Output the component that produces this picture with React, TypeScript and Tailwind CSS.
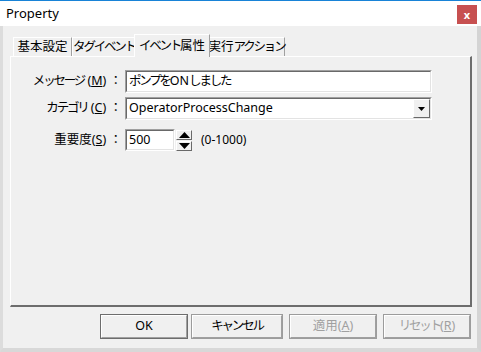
import React from 'react';

const font = { fontFamily: '"Noto Sans", "Noto Sans CJK JP", sans-serif' };

// narrow kana, like Meiryo UI
function K({ children }: { children: React.ReactNode }) {
  return <span className="tracking-[-2.2px]">{children}</span>;
}

function Tab({ label, active, width }: { label: React.ReactNode; active?: boolean; width: string }) {
  if (active) {
    return (
      <div className={'relative z-10 -mx-[2px] -mb-[1px] flex h-[23px] items-start justify-center whitespace-nowrap border-l border-t border-white border-r border-r-[#a0a0a0] bg-[#f0f0f0] pt-[2px] ' + width}>
        {label}
      </div>
    );
  }
  return (
    <div className={'mt-[3px] flex h-[19px] items-center justify-center whitespace-nowrap border-l border-t border-white border-r border-r-[#a0a0a0] ' + width}>
      {label}
    </div>
  );
}

function Button({ label, disabled, main, width }: { label: React.ReactNode; disabled?: boolean; main?: boolean; width: string }) {
  return (
    <div
      className={
        'flex h-[25px] items-center justify-center border ' +
        width +
        (main ? ' border-[#6d6d6d] ' : ' border-[#9c9c9c] ') +
        (disabled ? 'text-[#a0a0a0]' : 'text-black')
      }
    >
      <div className="flex h-full w-full items-center justify-center whitespace-nowrap border-b border-r border-b-[#a0a0a0] border-r-[#a0a0a0] border-l border-t border-l-white border-t-white">
        {label}
      </div>
    </div>
  );
}

function Field({ children, className }: { children: React.ReactNode; className: string }) {
  return (
    <div className={'flex border-l border-t border-l-[#a0a0a0] border-t-[#a0a0a0] border-b border-r border-b-white border-r-white ' + className}>
      <div className="flex flex-1 items-center whitespace-nowrap border-l border-t border-l-[#696969] border-t-[#696969] border-b border-r border-b-[#e3e3e3] border-r-[#e3e3e3] bg-white pl-[2px]">
        {children}
      </div>
    </div>
  );
}

function SpinButton({ up }: { up?: boolean }) {
  return (
    <div className="flex h-[10px] w-[16px] items-center justify-center border-b border-r border-b-[#696969] border-r-[#696969] border-l border-t border-l-white border-t-white bg-[#f0f0f0]">
      <svg width="11" height="6" viewBox="0 0 11 6">
        {up ? <path d="M0 6 L5.5 0 L11 6 Z" fill="#000" /> : <path d="M0 0 L5.5 6 L11 0 Z" fill="#000" />}
      </svg>
    </div>
  );
}

export default function App() {
  return (
    <div className="relative flex h-[352px] w-[481px] flex-col overflow-hidden bg-[#f0f0f0] text-[12px] text-black" style={font}>
      <div className="h-px w-full bg-[#1883d7]" />
      <div className="flex h-[25px] items-center justify-between bg-white pl-[6px] pr-[4px]">
        <span className="text-[13px]">Property</span>
        <div className="mt-[2px] flex h-[19px] w-[20px] items-center justify-center bg-[#c75050] text-[11px] font-bold leading-none text-white">
          x
        </div>
      </div>
      <div className="flex flex-1 border-l-[3px] border-l-[#dcdcdc] border-r-[4px] border-r-[#d4d4d4] border-b-[4px] border-b-[#d8d8d8]">
        <div className="flex flex-1 flex-col pl-[7px] pr-[4px] pt-[8px]">
          <div className="flex h-[22px] items-end pl-[3px] text-[12.5px]">
            <Tab label="基本設定" width="w-[59px]" />
            <Tab label={<K>タグイベント</K>} width="w-[64px]" />
            <Tab label={<><K>イベント</K>属性</>} active width="w-[76px]" />
            <Tab label={<>実行<K>アクション</K></>} width="w-[77px]" />
          </div>
          <div className="flex h-[251px] w-[462px] flex-col border-l border-t border-l-white border-t-white border-b-2 border-r-2 border-b-[#6d6d6d] border-r-[#6d6d6d]">
            <div className="flex flex-col gap-[4px] pt-[13px] text-[12.5px]">
              <div className="flex items-center">
                <div className="w-[112px] whitespace-nowrap pr-[1px] text-right">
                  <K>メッセージ</K> (<span className="underline">M</span>) ：
                </div>
                <Field className="ml-[2px] h-[23px] w-[307px]">
                  <K>ポンプを</K>ON<K>しました</K>
                </Field>
              </div>
              <div className="flex items-center">
                <div className="w-[112px] whitespace-nowrap pr-[1px] text-right">
                  <K>カテゴリ</K> (<span className="underline">C</span>) ：
                </div>
                <Field className="ml-[2px] h-[23px] w-[307px]">
                  <span className="flex-1">OperatorProcessChange</span>
                  <div className="flex h-full w-[17px] items-center justify-center border-l border-t border-l-white border-t-white border-b border-r border-b-[#696969] border-r-[#696969] bg-[#f0f0f0]">
                    <svg width="7" height="4" viewBox="0 0 7 4">
                      <path d="M0 0 L3.5 4 L7 0 Z" fill="#000" />
                    </svg>
                  </div>
                </Field>
              </div>
              <div className="mt-[5px] flex items-center">
                <div className="w-[112px] whitespace-nowrap pr-[1px] text-right">
                  重要度(<span className="underline">S</span>) ：
                </div>
                <Field className="ml-[2px] h-[22px] w-[50px]">500</Field>
                <div className="ml-[1px] flex flex-col gap-px">
                  <SpinButton up />
                  <SpinButton />
                </div>
                <span className="ml-[9px] text-[12px]">(0-1000)</span>
              </div>
            </div>
          </div>
          <div className="mt-[7px] flex justify-end pr-[2px] text-[12.5px]">
            <Button label="OK" main width="w-[88px]" />
            <div className="w-[3px]" />
            <Button label={<K>キャンセル</K>} width="w-[92px]" />
            <div className="w-[6px]" />
            <Button label={<>適用(<span className="underline">A</span>)</>} disabled width="w-[88px]" />
            <div className="w-[6px]" />
            <Button label={<><K>リセット</K> (<span className="underline">R</span>)</>} disabled width="w-[88px]" />
          </div>
        </div>
      </div>
    </div>
  );
}
